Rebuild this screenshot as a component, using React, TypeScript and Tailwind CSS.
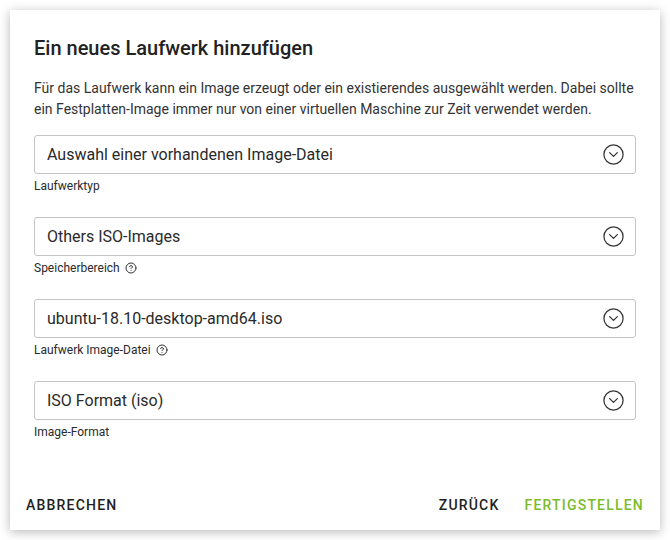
import React from 'react';
import { CircleChevronDown, CircleHelp } from 'lucide-react';

const fields = [
  { value: 'Auswahl einer vorhandenen Image-Datei', label: 'Laufwerktyp', help: false },
  { value: 'Others ISO-Images', label: 'Speicherbereich', help: true },
  { value: 'ubuntu-18.10-desktop-amd64.iso', label: 'Laufwerk Image-Datei', help: true },
  { value: 'ISO Format (iso)', label: 'Image-Format', help: false },
];

function SelectField({ value, label, help }: { value: string; label: string; help: boolean }) {
  return (
    <div>
      <div className="h-[39px] border border-[#c4c4c4] rounded-[3px] flex items-center justify-between pl-[12px] pr-[10px]">
        <span className="text-[16px] text-[#2a2a2a]">{value}</span>
        <CircleChevronDown className="w-[23px] h-[23px] text-[#333]" strokeWidth={1.3} />
      </div>
      <div className="flex items-center gap-[5px] mt-[4px] h-[16px] text-[12px] text-[#2a2a2a]">
        {label}
        {help && <CircleHelp className="w-[12px] h-[12px] text-[#333]" strokeWidth={2} />}
      </div>
    </div>
  );
}

export default function App() {
  return (
    <div className="w-[670px] h-[540px] bg-white p-[10px] font-['Roboto',sans-serif]">
      <div className="w-[650px] h-[520px] bg-white shadow-[0_2px_10px_rgba(0,0,0,0.28)] flex flex-col">
        <div className="px-[24px] pt-[26px] flex-1">
          <h1 className="text-[20px] font-medium text-[#222] leading-[24px]">Ein neues Laufwerk hinzufügen</h1>
          <p className="mt-[18px] text-[14px] leading-[21px] text-[#333]">
            Für das Laufwerk kann ein Image erzeugt oder ein existierendes ausgewählt werden. Dabei sollte ein Festplatten-Image immer nur von einer virtuellen Maschine zur Zeit verwendet werden.
          </p>
          <div className="mt-[15px] flex flex-col gap-[23px]">
            {fields.map((f) => (
              <SelectField key={f.label} {...f} />
            ))}
          </div>
        </div>
        <div className="flex items-center justify-between pl-[16px] pr-[16px] pb-[14px]">
          <button className="text-[14px] font-medium tracking-[1.2px] text-[#222]">ABBRECHEN</button>
          <div className="flex gap-[25px]">
            <button className="text-[14px] font-medium tracking-[1.2px] text-[#222]">ZURÜCK</button>
            <button className="text-[14px] font-medium tracking-[1.2px] text-[#7cbb2c]">FERTIGSTELLEN</button>
          </div>
        </div>
      </div>
    </div>
  );
}
